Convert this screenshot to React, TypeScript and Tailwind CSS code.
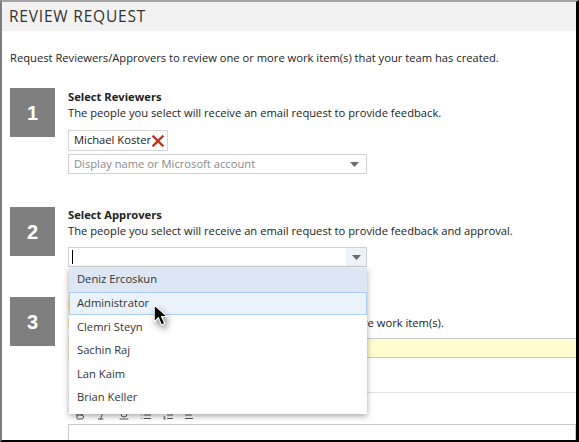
import { Bold, Italic, Underline, List, ListOrdered, AlignLeft } from 'lucide-react';

const approvers = ['Deniz Ercoskun', 'Administrator', 'Clemri Steyn', 'Sachin Raj', 'Lan Kaim', 'Brian Keller'];

const StepNumber = ({ n }: { n: number }) => (
  <div className="w-[45px] h-[49px] shrink-0 bg-[#7f7f7f] flex items-center justify-center text-white text-[20px] font-bold font-['Liberation_Sans',sans-serif]">
    {n}
  </div>
);

const Caret = () => (
  <svg width="9" height="5" viewBox="0 0 9 5" className="text-[#6b6b6b]">
    <path d="M0 0h9L4.5 5z" fill="currentColor" />
  </svg>
);

export default function App() {
  return (
    <div className="w-[579px] h-[442px] overflow-hidden bg-white font-['Open_Sans',sans-serif] text-[#222] border-l-2 border-t-2 border-l-[#7d7d7d] border-t-[#a3a3a3] border-r-[3px] border-b-2 border-r-black border-b-black relative">
      <div className="h-[29px] bg-[#f2f2f2] flex items-center pl-[7px] text-[15.5px] text-[#333] tracking-[0.8px]">
        REVIEW REQUEST
      </div>

      <div className="pl-[8px] pt-[19px] text-[11.2px] leading-[16px]">
        Request Reviewers/Approvers to review one or more work item(s) that your team has created.
      </div>

      {/* step 1 */}
      <div className="flex gap-[13px] pl-[8px] mt-[22px]">
        <StepNumber n={1} />
        <div className="flex flex-col">
          <div className="text-[11.2px] font-bold leading-[16px] mt-[1px]">Select Reviewers</div>
          <div className="text-[11.2px] leading-[16px]">The people you select will receive an email request to provide feedback.</div>
          <div className="mt-[9px] h-[21px] self-start flex items-center gap-[1px] border border-[#d6d6d6] pl-[5px] pr-[3px] text-[11.2px]">
            Michael Koster
            <svg width="12" height="12" viewBox="0 0 12 12">
              <path d="M1.5 1.5l9 9M10.5 1.5l-9 9" stroke="#c4331f" strokeWidth="2.4" strokeLinecap="square" />
            </svg>
          </div>
          <div className="mt-[3px] w-[299px] h-[20px] border border-[#d3d3d3] flex items-center justify-between pl-[5px] pr-[7px] text-[11.2px] text-[#8a8a8a]">
            Display name or Microsoft account
            <Caret />
          </div>
        </div>
      </div>

      {/* step 2 */}
      <div className="flex gap-[13px] pl-[8px] mt-[33px]">
        <StepNumber n={2} />
        <div className="flex flex-col">
          <div className="text-[11.2px] font-bold leading-[16px]">Select Approvers</div>
          <div className="text-[11.2px] leading-[16px]">The people you select will receive an email request to provide feedback and approval.</div>
          <div className="mt-[8px] w-[299px] h-[20px] border border-[#cfcfcf] flex items-center justify-between">
            <div className="ml-[3px] w-[1px] h-[14px] bg-black" />
            <div className="h-full w-[20px] bg-[#eef3fa] flex items-center justify-center">
              <Caret />
            </div>
          </div>
        </div>
      </div>

      {/* step 3 */}
      <div className="flex gap-[13px] pl-[8px] mt-[30px]">
        <StepNumber n={3} />
        <div className="flex flex-col flex-1">
          <div className="text-[11.2px] font-bold leading-[16px]">Enter Request Details</div>
          <div className="text-[11.2px] leading-[16px] mt-[2px]">Enter a title and instructions for reviewing the one or more work item(s).</div>
          <div className="mt-[7px] h-[20px] bg-[#fffcd0] border-y border-[#cbcbcb]" />
          <div className="mt-[34px] h-[32px] border-t border-[#e2e2e2] flex items-end gap-[10px] pl-[6px] pb-[3px] text-[#555]">
            <Bold size={12} />
            <Italic size={12} />
            <Underline size={12} />
            <List size={12} />
            <ListOrdered size={12} />
            <AlignLeft size={12} />
          </div>
          <div className="h-[40px] border border-[#cbcbcb]" />
        </div>
      </div>

      {/* dropdown */}
      <div className="absolute left-[67px] top-[266px] w-[298px] pb-[4px] bg-white shadow-[0_2px_6px_rgba(0,0,0,0.35)]">
        {approvers.map((name, i) => (
          <div
            key={name}
            className={
              'h-[23.6px] flex items-center pl-[7px] text-[11.2px] text-[#333] ' +
              (i === 0
                ? 'bg-[#dce6f4] border border-transparent'
                : i === 1
                ? 'bg-[#eaf2fc] border border-[#a9cdf4]'
                : 'border border-transparent')
            }
          >
            {name}
          </div>
        ))}
      </div>

      {/* mouse pointer */}
      <svg
        className="absolute left-[151px] top-[302px] drop-shadow-[2px_4px_3px_rgba(0,0,0,0.45)]"
        width="15"
        height="23"
        viewBox="0 0 14 22"
      >
        <path d="M1 1v16l4-4 3 7 3-1.3-3-6.7h5.5z" fill="black" stroke="white" strokeWidth="1" strokeLinejoin="round" />
      </svg>
    </div>
  );
}
